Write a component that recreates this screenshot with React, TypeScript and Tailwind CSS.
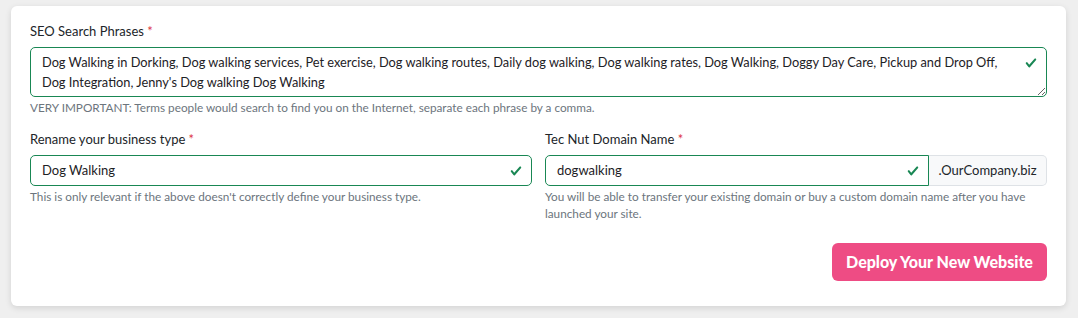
import React from "react"

const font = { fontFamily: "Lato, 'Noto Sans', sans-serif" }

function Check({ className = "" }: { className?: string }) {
  return (
    <svg viewBox="0 0 8 8" className={className} aria-hidden>
      <path
        fill="#198754"
        d="M2.3 6.73.6 4.53c-.4-1.04.46-1.4 1.1-.8l1.1 1.4 3.4-3.8c.6-.63 1.6-.27 1.2.7l-4 4.6c-.43.5-.8.4-1.1.1z"
      />
    </svg>
  )
}

function Label({ children }: { children: React.ReactNode }) {
  return (
    <label className="block text-[13px] leading-[20px] text-[#212529] mb-[6px]">
      {children} <span className="text-[#dc3545]">*</span>
    </label>
  )
}

function Help({ children }: { children: React.ReactNode }) {
  return <p className="text-[11.75px] leading-[17px] text-[#6c757d] mt-[2px]">{children}</p>
}

export default function App() {
  const phrases =
    "Dog Walking in Dorking, Dog walking services, Pet exercise, Dog walking routes, Daily dog walking, Dog walking rates, Dog Walking, Doggy Day Care, Pickup and Drop Off,\nDog Integration, Jenny's Dog walking Dog Walking"

  return (
    <div className="min-h-[318px] bg-[#efefef] pt-[6px] pl-[11px] pr-[12px]" style={font}>
      <div className="bg-white rounded-md shadow-[0_2px_6px_rgba(0,0,0,0.12)] px-[19px] pt-[15px] pb-[25px]">
        {/* SEO phrases */}
        <Label>SEO Search Phrases</Label>
        <div className="relative">
          <textarea
            readOnly
            wrap="off"
            value={phrases}
            className="block w-full h-[50px] overflow-hidden resize-y rounded-[5px] border border-[#198754] bg-white pl-[11px] pr-[34px] py-[4px] text-[12.8px] leading-[20px] text-[#1d2125] outline-none"
            style={font}
          />
          <Check className="absolute right-[10px] top-[10px] w-[12px] h-[12px]" />
        </div>
        <Help>VERY IMPORTANT: Terms people would search to find you on the Internet, separate each phrase by a comma.</Help>

        {/* Business type + domain */}
        <div className="grid grid-cols-2 gap-x-[13px] mt-[13px]">
          <div>
            <Label>Rename your business type</Label>
            <div className="flex items-center h-[31px] rounded-[5px] border border-[#198754] pl-[11px] pr-[9px]">
              <span className="flex-1 text-[13px] text-[#1d2125]">Dog Walking</span>
              <Check className="w-[12px] h-[12px]" />
            </div>
            <Help>This is only relevant if the above doesn't correctly define your business type.</Help>
          </div>
          <div>
            <Label>Tec Nut Domain Name</Label>
            <div className="flex h-[31px]">
              <div className="flex flex-1 items-center rounded-l-[5px] border border-[#198754] pl-[11px] pr-[9px]">
                <span className="flex-1 text-[13px] text-[#1d2125]">dogwalking</span>
                <Check className="w-[12px] h-[12px]" />
              </div>
              <div className="flex w-[118px] items-center justify-center rounded-r-[5px] border border-l-0 border-[#dee2e6] bg-[#f8f9fa] text-[13px] text-[#212529]">
                .OurCompany.biz
              </div>
            </div>
            <Help>
              You will be able to transfer your existing domain or buy a custom domain name after you have launched your
              site.
            </Help>
          </div>
        </div>

        <div className="flex justify-end mt-[21px]">
          <button className="w-[215px] h-[38px] rounded-[6px] bg-[#ee4c84] text-white text-[16px] font-black">
            Deploy Your New Website
          </button>
        </div>
      </div>
    </div>
  )
}
